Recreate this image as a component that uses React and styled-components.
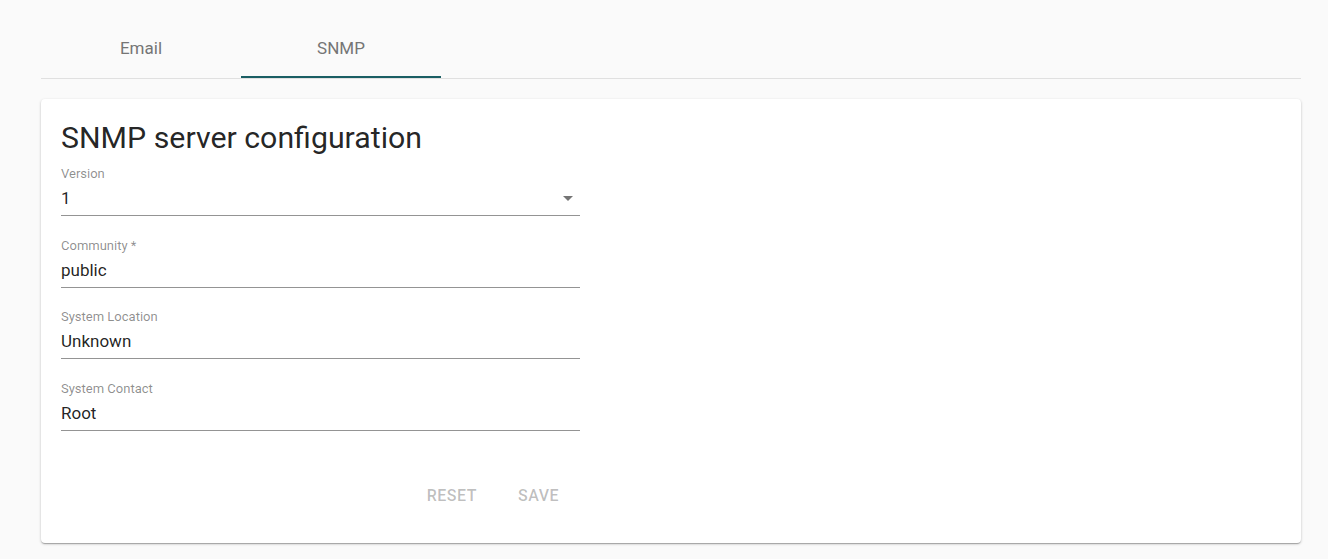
import React from 'react'
import styled, { createGlobalStyle } from 'styled-components'

const Global = createGlobalStyle`
  body {
    margin: 0;
    background: #fafafa;
    font-family: Roboto, "Liberation Sans", Arial, sans-serif;
  }
`

const Page = styled.div`
  padding: 21px 27px 15px 41px;
`

const TabBar = styled.div`
  display: flex;
  border-bottom: 1px solid #e0e0e0;
`

const Tab = styled.div`
  width: 200px;
  height: 57px;
  box-sizing: border-box;
  display: flex;
  align-items: center;
  justify-content: center;
  padding-bottom: 1px;
  font-size: 17px;
  color: #757575;
  border-bottom: 2px solid ${p => (p.active ? '#1a5e63' : 'transparent')};
  cursor: pointer;
`

const Card = styled.div`
  margin-top: 20px;
  background: #fff;
  border-radius: 4px;
  box-shadow: 0 1px 3px rgba(0, 0, 0, 0.2), 0 1px 1px rgba(0, 0, 0, 0.14),
    0 2px 1px -1px rgba(0, 0, 0, 0.12);
  padding: 22px 20px 29px;
`

const Title = styled.h2`
  margin: 0;
  font-size: 30.3px;
  font-weight: 400;
  line-height: 34px;
  color: rgba(0, 0, 0, 0.87);
`

const Form = styled.div`
  width: 519px;
  margin-top: 12px;
  display: flex;
  flex-direction: column;
  gap: 22.6px;
`

const Field = styled.div`
  position: relative;
  display: flex;
  flex-direction: column;
`

const Label = styled.label`
  font-size: 13px;
  line-height: 14px;
  color: rgba(0, 0, 0, 0.45);
`

const Value = styled.div`
  margin-top: 7px;
  padding-bottom: 7px;
  font-size: 17px;
  line-height: 20px;
  color: rgba(0, 0, 0, 0.87);
  border-bottom: 1px solid #949494;
`

const Arrow = styled.svg`
  position: absolute;
  right: 0;
  top: 19px;
  width: 24px;
  height: 24px;
  fill: rgba(0, 0, 0, 0.54);
`

const Actions = styled.div`
  width: 519px;
  margin-top: 47px;
  display: flex;
  justify-content: flex-end;
  gap: 9px;
  padding-right: 5px;
  box-sizing: border-box;
`

const Button = styled.button`
  height: 36px;
  padding: 0 16px;
  border: none;
  background: none;
  font-family: inherit;
  font-size: 16px;
  letter-spacing: 0.5px;
  font-weight: 500;
  text-transform: uppercase;
  color: rgba(0, 0, 0, 0.26);
  cursor: default;
`

const fields = [
  { label: 'Version', value: '1', select: true },
  { label: 'Community *', value: 'public' },
  { label: 'System Location', value: 'Unknown' },
  { label: 'System Contact', value: 'Root' },
]

export default function App() {
  return (
    <Page>
      <Global />
      <TabBar>
        <Tab>Email</Tab>
        <Tab active>SNMP</Tab>
      </TabBar>
      <Card>
        <Title>SNMP server configuration</Title>
        <Form>
          {fields.map(f => (
            <Field key={f.label}>
              <Label>{f.label}</Label>
              <Value>{f.value}</Value>
              {f.select && (
                <Arrow viewBox="0 0 24 24">
                  <path d="M7 10l5 5 5-5z" />
                </Arrow>
              )}
            </Field>
          ))}
        </Form>
        <Actions>
          <Button disabled>Reset</Button>
          <Button disabled>Save</Button>
        </Actions>
      </Card>
    </Page>
  )
}
